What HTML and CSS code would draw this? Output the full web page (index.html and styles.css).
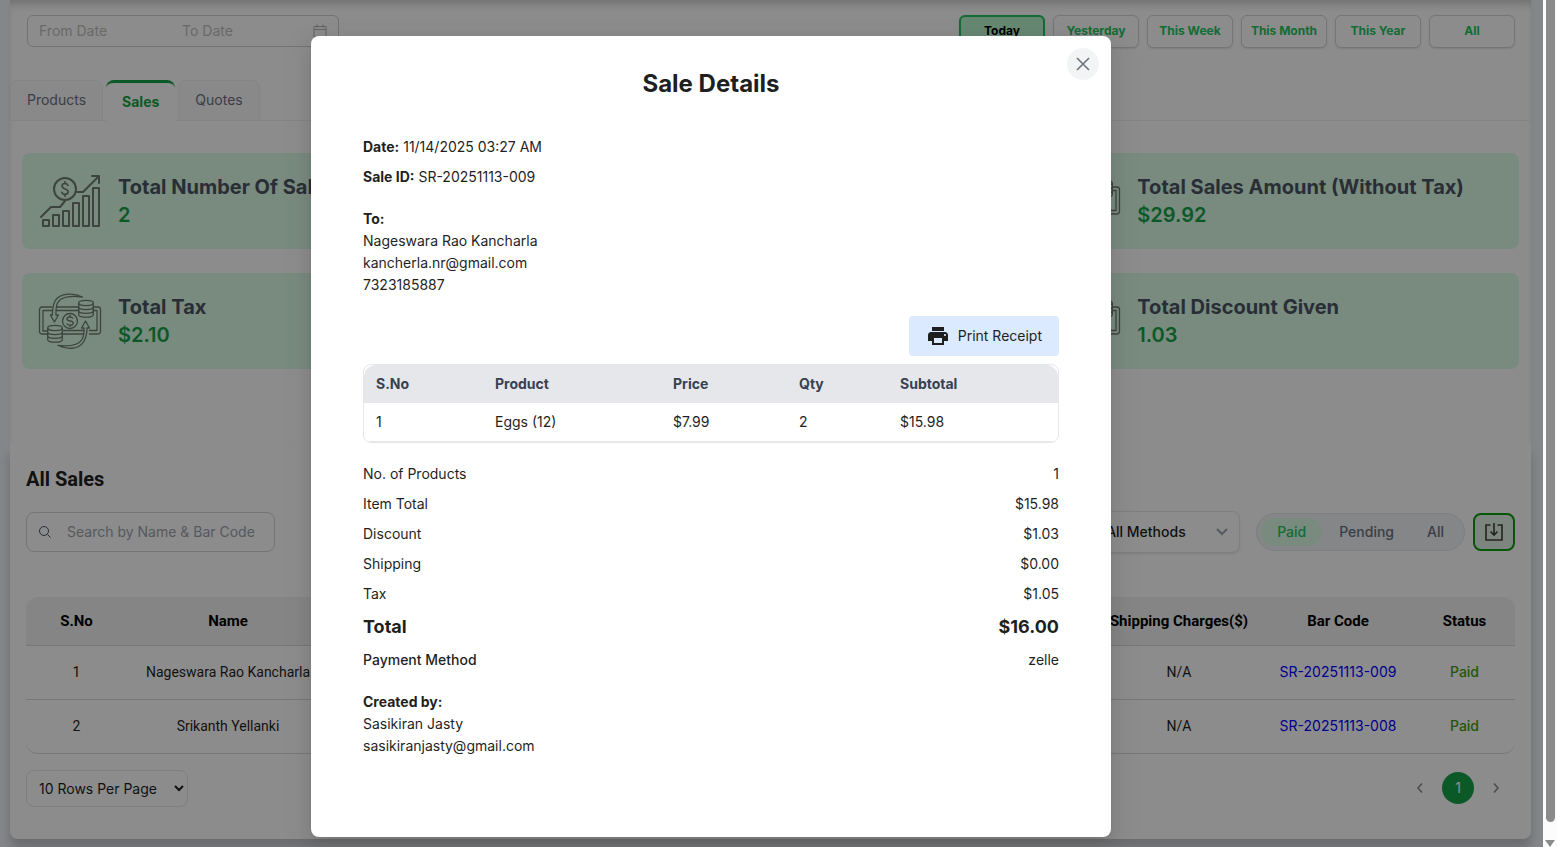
FILE: index.html
```html
<!DOCTYPE html>
<html lang="en">
<head>
  <meta charset="UTF-8" />
  <title>Sales Report</title>
  <meta name="viewport" content="width=device-width, initial-scale=1.0" />
  <link rel="stylesheet" href="styles.css">
</head>
<body>
  <!-- shared icons -->
  <svg class="sprite" aria-hidden="true">
    <symbol id="icon-growth" viewBox="-2 -3 64 64">
      <g fill="none" stroke="currentColor" stroke-width="2" stroke-linejoin="round" stroke-linecap="round">
        <rect x="3" y="48" width="6" height="6" /><rect x="13" y="43" width="6" height="11" />
        <rect x="23" y="39" width="6" height="15" /><rect x="33" y="31" width="6" height="23" />
        <rect x="43" y="24" width="6" height="30" /><rect x="53" y="16" width="6" height="38" />
        <circle cx="25" cy="17" r="11" />
        <path d="M1 45 11 35h9l5-6M37 20h6L59 4M52 4h7v7" />
        <path d="M28 13.500c-.6-1.300-1.700-2-3-2-1.800 0-3 1.100-3 2.600 0 3.600 6.200 2 6.200 5.500 0 1.700-1.400 2.800-3.200 2.800-1.500 0-2.700-.8-3.300-2.100M25 9.500v2M25 22.500v2" stroke-width="1.600" />
      </g>
    </symbol>
    <symbol id="icon-money" viewBox="0 -3 64 64">
      <g fill="none" stroke="currentColor" stroke-width="1.300" stroke-linejoin="round">
        <path d="M14 15H4a2.500 2.500 0 0 0-2.500 2.500v22A2.500 2.500 0 0 0 4 42h6M24 42h22M51 42h9a2.500 2.500 0 0 0 2.500-2.500v-22A2.500 2.500 0 0 0 60 15h-5M18 15h23" />
        <path d="M14 18.500H5V39h5M24 38.500h22M51 38.500h8v-20h-4M18 18.500h23" />
        <circle cx="32" cy="29" r="7.500" />
        <path d="M35 26.500c-.6-1-1.600-1.500-3-1.500-1.700 0-3 .8-3 2 0 2.800 6.200 1.200 6.200 4 0 1.300-1.400 2.200-3.200 2.200-1.500 0-2.700-.6-3.300-1.700M32 23v2M32 33v2" />
        <path d="M44.500 5C37 1 22 0 17 9c-2 4-2.600 8-2.600 14h-2l4 7 4-7h-2.500c0-5 .2-9 1.600-12C23 4 35 3.500 44.500 5z" />
        <path d="M20 53.500c7.500 3.500 20 5 25.500-3.500 2.500-4 3.500-8 3.500-14h2.500l-4-7-4 7h2.600c0 5-.7 9-2.100 11.500C40 54 30 54.500 20 53.500z" />
        <ellipse cx="48" cy="11" rx="7.300" ry="2.600" />
        <path d="M40.700 11v11.500c0 1.500 3.200 2.700 7.300 2.700s7.300-1.200 7.300-2.700V11M40.700 15c0 1.500 3.200 2.600 7.300 2.600s7.300-1.100 7.300-2.600M40.700 18.700c0 1.500 3.200 2.600 7.300 2.600s7.300-1.100 7.300-2.600" />
        <ellipse cx="17" cy="36" rx="7.300" ry="2.600" />
        <path d="M9.700 36v11.500c0 1.500 3.200 2.700 7.300 2.700s7.300-1.200 7.300-2.700V36M9.700 40c0 1.500 3.200 2.600 7.300 2.600s7.300-1.100 7.300-2.600M9.700 43.700c0 1.500 3.200 2.600 7.300 2.600s7.300-1.100 7.300-2.600" />
      </g>
    </symbol>
  </svg>

  <div class="app">
    <main class="page">
      <section class="stats">
        <div class="toolbar">
          <div class="date-range">
            <input type="text" placeholder="From Date" aria-label="From Date" />
            <input type="text" placeholder="To Date" aria-label="To Date" />
            <svg width="14" height="14" viewBox="0 0 14 14" fill="none" stroke="currentColor"><path d="M1 2.500h12v10.500H1zM1 5.500h12M4 .5v3M10 .5v3" /></svg>
          </div>
          <div class="periods">
            <button type="button" class="period active">Today</button>
            <button type="button" class="period">Yesterday</button>
            <button type="button" class="period">This Week</button>
            <button type="button" class="period">This Month</button>
            <button type="button" class="period">This Year</button>
            <button type="button" class="period">All</button>
          </div>
        </div>

        <nav class="tabs">
          <button type="button" class="tab">Products</button>
          <button type="button" class="tab active">Sales</button>
          <button type="button" class="tab">Quotes</button>
        </nav>

        <div class="cards">
          <div class="card">
            <svg class="card-icon"><use href="#icon-growth" /></svg>
            <div><h3>Total Number Of Sales</h3><p>2</p></div>
          </div>
          <div class="card last">
            <svg class="card-icon"><use href="#icon-money" /></svg>
            <div><h3>Total Sales Amount (Without Tax)</h3><p>$29.92</p></div>
          </div>
          <div class="card">
            <svg class="card-icon"><use href="#icon-money" /></svg>
            <div><h3>Total Tax</h3><p>$2.10</p></div>
          </div>
          <div class="card last">
            <svg class="card-icon"><use href="#icon-money" /></svg>
            <div><h3>Total Discount Given</h3><p>1.03</p></div>
          </div>
        </div>
      </section>

      <section class="sales">
        <h2>All Sales</h2>
        <div class="filters">
          <label class="search">
            <svg width="14" height="14" viewBox="0 0 14 14" fill="none" stroke="currentColor"><circle cx="6" cy="6" r="4.500" /><path d="m9.500 9.500 3 3" /></svg>
            <input type="text" placeholder="Search by Name &amp; Bar Code" aria-label="Search" />
          </label>
          <div class="filters-right">
            <div class="method">
              <select aria-label="Payment method"><option>All Methods</option></select>
              <svg width="12" height="8" viewBox="0 0 12 8" fill="none" stroke="currentColor" stroke-width="2"><path d="m1 1 5 5 5-5" /></svg>
            </div>
            <div class="segments">
              <button type="button" class="active">Paid</button>
              <button type="button">Pending</button>
              <button type="button">All</button>
            </div>
            <button type="button" class="export" aria-label="Export">
              <svg width="18" height="18" viewBox="0 0 18 18" fill="none" stroke="currentColor" stroke-width="1.600"><path d="M5.500 2H1v15h16V2h-4.500M9 0v12M5.500 8.500 9 12l3.500-3.500" /></svg>
            </button>
          </div>
        </div>

        <div class="table-wrap">
          <table class="sales-table">
            <colgroup>
              <col class="col-no" /><col class="col-name" /><col /><col class="col-shipping" /><col class="col-code" /><col class="col-status" />
            </colgroup>
            <thead>
              <tr><th>S.No</th><th>Name</th><th></th><th>Shipping Charges($)</th><th>Bar Code</th><th>Status</th></tr>
            </thead>
            <tbody>
              <tr><td>1</td><td>Nageswara Rao Kancharla</td><td></td><td>N/A</td><td><a href="#">SR-20251113-009</a></td><td class="paid">Paid</td></tr>
              <tr><td>2</td><td>Srikanth Yellanki</td><td></td><td>N/A</td><td><a href="#">SR-20251113-008</a></td><td class="paid">Paid</td></tr>
            </tbody>
          </table>
        </div>

        <div class="table-footer">
          <select class="page-size" aria-label="Rows per page"><option>10 Rows Per Page</option></select>
          <div class="pager">
            <button type="button" aria-label="Previous"><svg width="8" height="12" viewBox="0 0 8 12" fill="none" stroke="currentColor" stroke-width="1.500"><path d="M6 1.500 2 6l4 4.500" /></svg></button>
            <button type="button" class="current">1</button>
            <button type="button" aria-label="Next"><svg width="8" height="12" viewBox="0 0 8 12" fill="none" stroke="currentColor" stroke-width="1.500"><path d="M2 1.500 6 6l-4 4.500" /></svg></button>
          </div>
        </div>
      </section>
    </main>

    <div class="overlay">
      <div class="modal" role="dialog" aria-labelledby="modal-title">
        <button type="button" class="close" aria-label="Close">
          <svg width="14" height="14" viewBox="0 0 14 14" fill="none" stroke="currentColor" stroke-width="1.600"><path d="m1 1 12 12M13 1 1 13" /></svg>
        </button>
        <h2 id="modal-title">Sale Details</h2>

        <div class="meta">
          <p><b>Date:</b> 11/14/2025 03:27 AM</p>
          <p><b>Sale ID:</b> SR-20251113-009</p>
        </div>

        <div class="person">
          <p><b>To:</b></p>
          <p>Nageswara Rao Kancharla</p>
          <p>kancherla.nr@gmail.com</p>
          <p>7323185887</p>
        </div>

        <button type="button" class="print">
          <svg width="24" height="24" viewBox="0 0 24 24" fill="currentColor"><path d="M19 8H5c-1.660 0-3 1.340-3 3v6h4v4h12v-4h4v-6c0-1.660-1.340-3-3-3zm-3 11H8v-5h8v5zm3-7c-.55 0-1-.45-1-1s.45-1 1-1 1 .45 1 1-.45 1-1 1zm-1-9H6v4h12V3z" /></svg>
          Print Receipt
        </button>

        <div class="items">
          <table>
            <colgroup>
              <col class="item-no" /><col class="item-product" /><col class="item-price" /><col class="item-qty" /><col />
            </colgroup>
            <thead>
              <tr><th>S.No</th><th>Product</th><th>Price</th><th>Qty</th><th>Subtotal</th></tr>
            </thead>
            <tbody>
              <tr><td>1</td><td>Eggs (12)</td><td>$7.99</td><td>2</td><td>$15.98</td></tr>
            </tbody>
          </table>
        </div>

        <dl class="summary">
          <div><dt>No. of Products</dt><dd>1</dd></div>
          <div><dt>Item Total</dt><dd>$15.98</dd></div>
          <div><dt>Discount</dt><dd>$1.03</dd></div>
          <div><dt>Shipping</dt><dd>$0.00</dd></div>
          <div><dt>Tax</dt><dd>$1.05</dd></div>
          <div class="total"><dt>Total</dt><dd>$16.00</dd></div>
          <div class="payment"><dt>Payment Method</dt><dd>zelle</dd></div>
        </dl>

        <div class="person">
          <p><b>Created by:</b></p>
          <p>Sasikiran Jasty</p>
          <p>sasikiranjasty@gmail.com</p>
        </div>
      </div>
    </div>
  </div>

  <div class="scrollbar" aria-hidden="true">
    <div class="thumb"></div>
    <div class="arrow"></div>
  </div>
</body>
</html>
```
FILE: styles.css
```css
* {
  box-sizing: border-box;
}

body {
  margin: 0;
  min-height: 100vh;
  display: flex;
  background: #fcfcfc;
  color: #1f1f1f;
  font-family: Inter, sans-serif;
  font-size: 14px;
  line-height: 22px;
}

h2,
h3,
p,
dl,
dd {
  margin: 0;
}

button,
input,
select {
  font: inherit;
  color: inherit;
}

button {
  padding: 0;
  border: none;
  background: none;
  cursor: pointer;
}

.sprite {
  display: none;
}

.app {
  position: relative;
  flex: 1;
  min-width: 0;
  overflow: hidden;
  background: #f1f4f9;
}

.page {
  padding: 0 12px 8px 10px;
}

.stats {
  background: white;
  padding-bottom: 74px;
  box-shadow: inset 0 8px 8px -4px rgba(0, 0, 0, 0.2), 0 0 4px rgba(0, 0, 0, 0.06);
}

/* date range + period buttons */
.toolbar {
  display: flex;
  justify-content: space-between;
  align-items: flex-start;
  padding: 15px 16px 32px 17px;
}

.date-range {
  display: flex;
  align-items: center;
  width: 312px;
  height: 32px;
  padding: 0 11px;
  border: 1px solid #d0d0d0;
  border-radius: 6px;
  color: #b0b0b0;
}

.date-range input {
  flex: 1;
  min-width: 0;
  padding: 0 6px 0 0;
  border: none;
  background: none;
}

.date-range input:first-child {
  margin-right: 12px;
}

.date-range svg {
  flex: none;
}

::placeholder {
  color: #bfbfbf;
}

.periods {
  display: flex;
  gap: 8px;
}

.period {
  width: 86px;
  height: 33px;
  padding-bottom: 2px;
  border: 1px solid #d1d5db;
  border-radius: 6px;
  background: white;
  box-shadow: 0 1px 2px rgba(0, 0, 0, 0.1);
  color: #22c55e;
  font-size: 12px;
  font-weight: 700;
}

.period.active {
  border: 2px solid #22c55e;
  background: #bbf7d0;
  color: black;
}

.tabs {
  display: flex;
  align-items: flex-end;
  gap: 3px;
  border-bottom: 1px solid #f0f0f0;
}

.tab {
  height: 41px;
  margin-bottom: -1px;
  padding: 0 16px 2px;
  border: 1px solid #f0f0f0;
  border-radius: 8px 8px 0 0;
  background: #fafafa;
  color: #6b7280;
}

.tab.active {
  padding-bottom: 0;
  border: none;
  border-top: 3px solid #16a34a;
  background: white;
  color: #16a34a;
  font-weight: 700;
}

/* stat cards */
.cards {
  display: grid;
  grid-template-columns: repeat(3, 1fr);
  gap: 24px 32px;
  padding: 32px 12px 0;
}

.card {
  display: flex;
  align-items: center;
  gap: 16px;
  height: 96px;
  padding: 0 16px;
  border-radius: 8px;
  background: #dcfce7;
}

.card.last {
  grid-column: 3;
}

.card-icon {
  flex: none;
  width: 64px;
  height: 64px;
  color: #6f7d73;
}

.card h3 {
  color: #4b5563;
  font-size: 20px;
  font-weight: 700;
  line-height: 28px;
  white-space: nowrap;
}

.card p {
  color: #16a34a;
  font-size: 20px;
  font-weight: 600;
  line-height: 28px;
}

/* sales list */
.sales {
  padding: 22px 16px 32px;
  border-radius: 0 0 8px 8px;
  background: white;
  box-shadow: 0 10px 12px rgba(0, 0, 0, 0.2);
}

.sales h2 {
  font-family: Roboto, sans-serif;
  font-size: 20px;
  font-weight: 700;
  line-height: 28px;
}

.filters {
  display: flex;
  justify-content: space-between;
  align-items: center;
  margin-top: 18px;
}

.search {
  display: flex;
  align-items: center;
  gap: 15px;
  width: 249px;
  height: 40px;
  padding: 0 11px;
  border: 1px solid #d1d5db;
  border-radius: 8px;
  color: #4b5563;
}

.search input {
  min-width: 0;
  flex: 1;
  padding: 0;
  border: none;
  background: none;
}

.search input::placeholder {
  color: #9ca3af;
}

.filters-right {
  display: flex;
  align-items: center;
  gap: 8px;
}

.method {
  position: relative;
  margin-right: 8px;
}

.method select {
  appearance: none;
  width: 150px;
  height: 42px;
  padding: 0 15px;
  border: 1px solid #e5e7eb;
  border-radius: 8px;
  background: white;
  box-shadow: 0 1px 2px rgba(0, 0, 0, 0.1);
  font-weight: 500;
}

.method svg {
  position: absolute;
  top: 17px;
  right: 12px;
  color: #9ca3af;
}

.segments {
  display: flex;
  gap: 1px;
  padding: 4px;
  border: 1px solid #e5e7eb;
  border-radius: 20px;
  background: #f3f4f6;
}

.segments button {
  height: 28px;
  padding: 0 16px;
  border-radius: 14px;
  color: #6b7280;
  font-weight: 500;
}

.segments .active {
  background: #dcfce7;
  color: #22c55e;
}

.export {
  display: flex;
  align-items: center;
  justify-content: center;
  width: 42px;
  height: 38px;
  border: 2px solid #0a9e0a;
  border-radius: 8px;
  background: #e3f5e6;
  color: #404040;
}

.table-wrap {
  margin-top: 44px;
  overflow: hidden;
  border-radius: 12px;
  border-bottom: 1px solid #d9d9d9;
}

.sales-table {
  width: 100%;
  border-collapse: collapse;
  table-layout: fixed;
  font-family: Roboto, sans-serif;
  text-align: center;
}

.col-no,
.col-status {
  width: 101px;
}

.col-name {
  width: 202px;
}

.col-shipping {
  width: 166px;
}

.col-code {
  width: 152px;
}

.sales-table th {
  height: 48px;
  padding: 0;
  border-bottom: 1px solid #d9d9d9;
  background: #f2f2f2;
  color: black;
  font-size: 15px;
  font-weight: 700;
  white-space: nowrap;
}

.sales-table td {
  height: 54px;
  padding: 0;
  border-bottom: 1px solid #d9d9d9;
  white-space: nowrap;
}

.sales-table tr:last-child td {
  border-bottom: none;
}

.sales-table a {
  color: blue;
  font-family: Inter, sans-serif;
  text-decoration: none;
}

.sales-table .paid {
  color: #3fa00a;
  font-family: Inter, sans-serif;
  font-weight: 500;
}

.table-footer {
  display: flex;
  justify-content: space-between;
  align-items: flex-start;
  margin-top: 16px;
  padding-right: 12px;
}

.page-size {
  width: 162px;
  height: 37px;
  padding: 0 8px;
  border: 1px solid #e5e7eb;
  border-radius: 8px;
  background: white;
}

.pager {
  display: flex;
  align-items: center;
  gap: 15px;
  padding-top: 2px;
  color: #8a8a8a;
}

.pager button {
  display: flex;
  align-items: center;
  justify-content: center;
  min-width: 14px;
  height: 32px;
}

.pager .current {
  width: 32px;
  border-radius: 50%;
  background: #16a34a;
  color: white;
}

/* modal */
.overlay {
  position: absolute;
  inset: 0;
  display: flex;
  justify-content: center;
  align-items: flex-start;
  padding: 36px 121px 10px 0;
  background: rgba(0, 0, 0, 0.45);
}

.modal {
  position: relative;
  width: 800px;
  padding: 30px 52px 80px;
  border-radius: 8px;
  background: white;
  box-shadow: 0 6px 16px rgba(0, 0, 0, 0.08), 0 3px 6px -4px rgba(0, 0, 0, 0.12), 0 9px 28px 8px rgba(0, 0, 0, 0.05);
}

.close {
  position: absolute;
  top: 12px;
  right: 12px;
  display: flex;
  align-items: center;
  justify-content: center;
  width: 32px;
  height: 32px;
  border-radius: 50%;
  background: #f3f4f6;
  color: #6b7280;
}

.modal h2 {
  margin-bottom: 34px;
  font-size: 24px;
  font-weight: 700;
  line-height: 36px;
  text-align: center;
}

.modal b {
  font-weight: 700;
}

.meta {
  display: grid;
  gap: 8px;
}

.person {
  margin-top: 20px;
}

.print {
  display: flex;
  align-items: center;
  gap: 8px;
  height: 40px;
  margin: 20px 0 8px auto;
  padding: 0 17px;
  border-radius: 4px;
  background: #dbeafe;
}

.items {
  overflow: hidden;
  border: 1px solid #e5e7eb;
  border-radius: 8px;
}

.items table {
  width: 100%;
  border-collapse: separate;
  border-spacing: 0;
  table-layout: fixed;
  text-align: left;
}

.items th,
.items td {
  padding: 8px 12px;
}

.items th {
  background: #e5e7eb;
  color: #374151;
  font-weight: 700;
}

.items th:first-child {
  border-top-left-radius: 12px;
}

.items th:last-child {
  border-top-right-radius: 12px;
}

.items td {
  border-bottom: 1px solid #e5e7eb;
}

.item-no {
  width: 119px;
}

.item-product {
  width: 178px;
}

.item-price {
  width: 126px;
}

.item-qty {
  width: 101px;
}

.summary {
  display: grid;
  gap: 8px;
  margin-top: 20px;
}

.summary div {
  display: flex;
  justify-content: space-between;
}

.summary .total {
  font-size: 18px;
  font-weight: 700;
  line-height: 28px;
}

.payment dt {
  font-weight: 500;
}

/* page scrollbar */
.scrollbar {
  display: flex;
  flex-direction: column;
  align-items: center;
  justify-content: space-between;
  flex: none;
  width: 14px;
}

.thumb {
  width: 9px;
  height: 97%;
  border-radius: 0 0 5px 5px;
  background: #8b8b8b;
}

.arrow {
  border: 5px solid transparent;
  border-top: 7px solid #8b8b8b;
  border-bottom: 0;
}
```
